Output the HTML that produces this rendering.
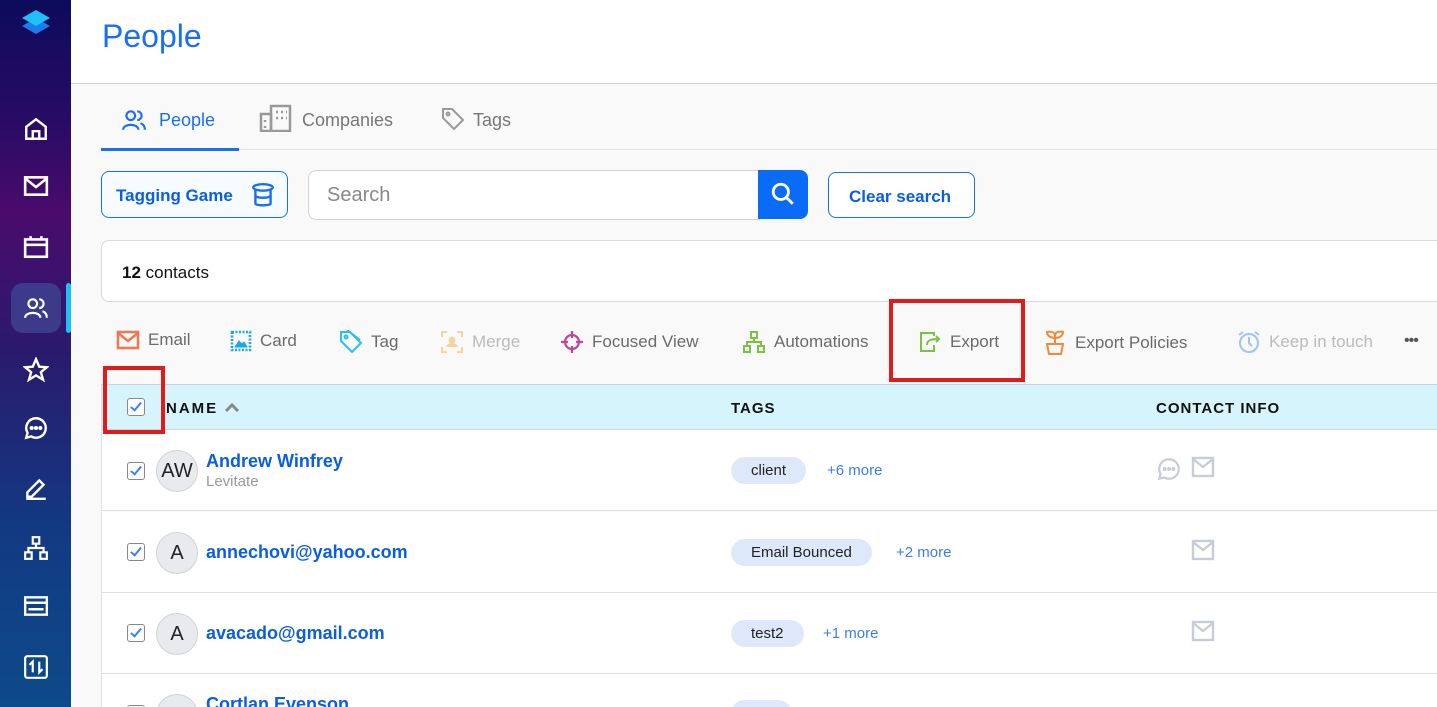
<!DOCTYPE html>
<html style="overflow:hidden;height:707px"><head><meta charset="utf-8"><style>
*{box-sizing:border-box;margin:0;padding:0}
html,body{overflow:hidden}
body{width:1437px;height:707px;overflow:hidden;font-family:"Liberation Sans",sans-serif;background:#f9f9f9;position:relative}
.sb{position:absolute;left:0;top:0;width:71px;height:707px;background:linear-gradient(180deg,#0c0b5c 0%,#2a0b66 18%,#4a0b6c 30%,#2a1a6e 50%,#123a82 75%,#0d4a8a 100%)}
.sb svg{position:absolute;left:23px}
.hdr{position:absolute;left:71px;top:0;right:0;height:84px;background:#fff;border-bottom:1px solid #d0d3dc}
.t{position:absolute;white-space:nowrap}
.tb{position:absolute;color:#777;font-size:18px}
.btn{position:absolute;border:1px solid #1a6ff0;border-radius:8px;background:#fff;color:#0a5ee0;font-size:17px;font-weight:bold}
.act{position:absolute;top:330px;font-size:17px;color:#6a6a6a;display:flex;align-items:center;gap:8px}
.row{position:absolute;left:101px;right:0;height:81px;background:#fff;border-bottom:1px solid #dcdfe6;border-left:1px solid #dcdfe6}
.cb{position:absolute;left:25px;width:18px;height:18px;border:1.5px solid #888;border-radius:3px;background:#fff}
.cb:after{content:"";position:absolute;left:5px;top:1px;width:4px;height:9px;border:solid #3b82f6;border-width:0 2px 2px 0;transform:rotate(40deg)}
.av{position:absolute;left:54px;width:42px;height:42px;border-radius:50%;background:#e8eaee;border:1px solid #cfd3da;font-size:20px;text-align:center;line-height:40px;color:#222}
.nm{position:absolute;left:104px;color:#0a5ee0;font-weight:bold;font-size:18px}
.tag{position:absolute;left:629px;height:27px;border-radius:14px;background:#dde9fb;font-size:15px;line-height:27px;padding:0 20px;color:#222}
.more{position:absolute;color:#3a7cf0;font-size:15px}
</style></head><body>
<div class="sb">
<svg style="top:8px;left:20px" width="32" height="30" viewBox="0 0 32 30"><path d="M16 10 L30 18 L16 26 L2 18Z" fill="#1b7be8"/><path d="M16 2 L30 10 L16 18 L2 10Z" fill="#1ec0f5"/></svg>
<svg style="top:116px" width="26" height="26" viewBox="0 0 24 24" fill="none" stroke="#fff" stroke-width="2.2"><path d="M3 10 L12 3 L21 10 V21 H3Z M9 21 V14 H15 V21"/></svg>
<svg style="top:174px" width="26" height="24" viewBox="0 0 24 22" fill="none" stroke="#fff" stroke-width="2.4"><rect x="2" y="3" width="20" height="16"/><path d="M2 4 L12 12 L22 4"/></svg>
<svg style="top:234px" width="26" height="26" viewBox="0 0 24 24" fill="none" stroke="#fff" stroke-width="2.4"><rect x="2" y="5" width="20" height="16"/><path d="M2 10 H22 M7 2 V6 M17 2 V6"/></svg>
<div style="position:absolute;left:11px;top:283px;width:50px;height:50px;border-radius:12px;background:#3c3a8a"></div>
<div style="position:absolute;left:66px;top:283px;width:5px;height:50px;background:#1ec0f5;border-radius:3px"></div>
<svg style="top:295px" width="26" height="26" viewBox="0 0 24 24" fill="none" stroke="#fff" stroke-width="2"><circle cx="9" cy="8" r="4"/><path d="M2 21 C2 15 16 15 16 21 M15 4 A4 4 0 0 1 15 12 M18 15 C21 16 22 18 22 21"/></svg>
<svg style="top:357px" width="26" height="26" viewBox="0 0 24 24" fill="none" stroke="#fff" stroke-width="2.2"><path d="M12 2 L15 9 L22 9.5 L16.5 14 L18.5 21 L12 17 L5.5 21 L7.5 14 L2 9.5 L9 9Z"/></svg>
<svg style="top:415px" width="26" height="26" viewBox="0 0 24 24" fill="none" stroke="#fff" stroke-width="2.2"><path d="M12 3a9 9 0 1 1-4.5 16.8L3 21l1.2-4.5A9 9 0 0 1 12 3z"/><circle cx="8" cy="12" r=".8" fill="#fff"/><circle cx="12" cy="12" r=".8" fill="#fff"/><circle cx="16" cy="12" r=".8" fill="#fff"/></svg>
<svg style="top:475px" width="26" height="26" viewBox="0 0 24 24" fill="none" stroke="#fff" stroke-width="2.2"><path d="M4 20 L4 16 L15 5 L19 9 L8 20Z M3 22 H21"/></svg>
<svg style="top:535px" width="26" height="26" viewBox="0 0 24 24" fill="none" stroke="#fff" stroke-width="2"><rect x="9" y="2" width="6" height="6"/><rect x="2" y="16" width="6" height="6"/><rect x="16" y="16" width="6" height="6"/><path d="M12 8 V12 M5 16 V12 H19 V16"/></svg>
<svg style="top:594px" width="26" height="24" viewBox="0 0 24 22" fill="none" stroke="#fff" stroke-width="2.2"><rect x="2" y="3" width="20" height="16"/><path d="M2 8 H22 M5 14 H19"/></svg>
<svg style="top:654px" width="26" height="26" viewBox="0 0 24 24" fill="none" stroke="#fff" stroke-width="2"><rect x="2" y="2" width="20" height="20" rx="2"/><path d="M9 17 V7 L6 10 M15 7 V17 L18 14"/></svg>
</div>
<div class="hdr"><div class="t" style="left:31px;top:18px;font-size:32px;color:#1a6ff0">People</div></div>
<div style="position:absolute;left:101px;right:0;top:149px;height:1px;background:#e2e4ea"></div>
<div style="position:absolute;left:101px;top:148px;width:138px;height:3px;background:#1a6ff0"></div>
<svg style="position:absolute;left:120px;top:107px" width="28" height="26" viewBox="0 0 24 24" fill="none" stroke="#1a6ff0" stroke-width="2"><circle cx="9" cy="8" r="4"/><path d="M2 21 C2 15 16 15 16 21 M15 4 A4 4 0 0 1 15 12 M18 15 C21 16 22 18 22 21"/></svg>
<div class="tb" style="left:159px;top:110px;color:#1a6ff0">People</div>
<svg style="position:absolute;left:259px;top:104px" width="33" height="28" viewBox="0 0 33 28" fill="none" stroke="#999" stroke-width="2.5"><rect x="12" y="2" width="19" height="25"/><rect x="2" y="10" width="10" height="17"/><path d="M17 8h2M22 8h2M27 8h1M17 14h2M22 14h2M27 14h1M6 16v2M6 22v2" /></svg>
<div class="tb" style="left:302px;top:110px">Companies</div>
<svg style="position:absolute;left:441px;top:107px" width="24" height="24" viewBox="0 0 24 24" fill="none" stroke="#999" stroke-width="2"><path d="M2 2 H11 L22 13 L13 22 L2 11Z"/><circle cx="7" cy="7" r="1.5"/></svg>
<div class="tb" style="left:473px;top:110px">Tags</div>
<div class="btn" style="left:101px;top:171px;width:187px;height:47px;background:#f6fbff"><span class="t" style="left:14px;top:14px">Tagging Game</span>
<svg style="position:absolute;left:148px;top:10px" width="26" height="26" viewBox="0 0 24 24" fill="none" stroke="#1a6ff0" stroke-width="2.2"><ellipse cx="12" cy="5" rx="9" ry="3"/><path d="M5 7 V20 C5 22 19 22 19 20 V7 M5 13 C8 15 16 15 19 13"/></svg></div>
<div style="position:absolute;left:308px;top:170px;width:452px;height:50px;background:#fff;border:1px solid #cfd3da;border-radius:8px 0 0 8px"><span class="t" style="left:18px;top:13px;font-size:20px;color:#888">Search</span></div>
<div style="position:absolute;left:758px;top:170px;width:50px;height:49px;background:#0a6cf5;border-radius:0 8px 8px 0"><svg style="position:absolute;left:12px;top:11px" width="26" height="26" viewBox="0 0 24 24" fill="none" stroke="#fff" stroke-width="2.6"><circle cx="10" cy="10" r="7"/><path d="M15 15 L21 21"/></svg></div>
<div class="btn" style="left:828px;top:172px;width:147px;height:46px"><span class="t" style="left:20px;top:14px">Clear search</span></div>
<div style="position:absolute;left:101px;top:240px;right:-10px;height:62px;background:#fff;border:1px solid #d6d9e0;border-radius:8px"><span class="t" style="left:20px;top:22px;font-size:17px;color:#111"><b>12</b> contacts</span></div>
<div class="act" style="left:116px"><svg width="24" height="20" viewBox="0 0 24 20" fill="none" stroke="#ee7a55" stroke-width="2.6"><rect x="2" y="2" width="20" height="16"/><path d="M2 3 L12 11 L22 3"/></svg>Email</div>
<div class="act" style="left:230px"><svg width="22" height="22" viewBox="0 0 22 22" fill="none" stroke="#1aa8e8" stroke-width="2.6" ><rect x="2" y="2" width="18" height="18" stroke-dasharray="2 1.5"/><path d="M5 17 L9 11 L12 14 L14 12 L17 17Z" fill="#1aa8e8" stroke-width="1"/></svg>Card</div>
<div class="act" style="left:339px"><svg width="24" height="24" viewBox="0 0 24 24" fill="none" stroke="#28c0ee" stroke-width="2"><path d="M2 2 H11 L22 13 L13 22 L2 11Z M8 0 L21 10"/><circle cx="7" cy="7" r="1.5"/></svg>Tag</div>
<div class="act" style="left:440px;color:#bbb"><svg width="24" height="24" viewBox="0 0 24 24" fill="none" stroke="#f5d49a" stroke-width="2"><path d="M2 7V2H7M17 2H22V7M22 17V22H17M7 22H2V17"/><circle cx="12" cy="10" r="2.5" fill="#f5d49a"/><path d="M7 17 C8 13 16 13 17 17" fill="#f5d49a"/></svg>Merge</div>
<div class="act" style="left:560px"><svg width="24" height="24" viewBox="0 0 24 24" fill="none" stroke="#c0459a" stroke-width="2.2"><circle cx="12" cy="12" r="7"/><path d="M12 1V8M12 16V23M1 12H8M16 12H23"/></svg>Focused View</div>
<div class="act" style="left:742px"><svg width="24" height="24" viewBox="0 0 24 24" fill="none" stroke="#7cc242" stroke-width="2"><rect x="9" y="2" width="6" height="6"/><rect x="2" y="16" width="6" height="6"/><rect x="16" y="16" width="6" height="6"/><path d="M12 8 V12 M5 16 V12 H19 V16"/></svg>Automations</div>
<div class="act" style="left:918px"><svg width="24" height="24" viewBox="0 0 24 24" fill="none" stroke="#7cc242" stroke-width="2"><path d="M16 15 V21 H3 V3 H16 V6 M9 15 C9 10 13 9 21 9 M18 6 L21 9 L18 12"/></svg>Export</div>
<div class="act" style="left:1043px"><svg width="24" height="26" viewBox="0 0 24 26" fill="none" stroke="#f08a3a" stroke-width="2"><path d="M4 14 H20 L18 24 H6Z M12 14 V6 M12 6 C12 2 8 1 4 2 C4 6 8 8 12 8 M12 6 C12 2 16 1 20 2 C20 6 16 8 12 8"/></svg>Export Policies</div>
<div class="act" style="left:1237px;color:#bbb"><svg width="24" height="24" viewBox="0 0 24 24" fill="none" stroke="#9cc4f5" stroke-width="2"><circle cx="12" cy="13" r="9"/><path d="M12 7V13L15 16M2 5L6 2M22 5L18 2"/></svg>Keep in touch</div>
<div class="t" style="left:1404px;top:332px;font-size:16px;color:#555;letter-spacing:-1px">•••</div>
<div style="position:absolute;left:101px;right:0;top:384px;height:46px;background:#d6f4fc;border-top:1px solid #c9d3e0;border-bottom:1px solid #c9d3e0;border-left:1px solid #dcdfe6">
<div class="cb" style="top:13px;border-color:#888"></div>
<span class="t" style="left:64px;top:15px;font-weight:bold;font-size:15px;letter-spacing:2px;color:#111">NAME</span>
<svg style="position:absolute;left:122px;top:16px" width="16" height="12" viewBox="0 0 16 12" fill="none" stroke="#888" stroke-width="3"><path d="M2 10 L8 4 L14 10"/></svg>
<span class="t" style="left:629px;top:15px;font-weight:bold;font-size:15px;letter-spacing:1px;color:#111">TAGS</span>
<span class="t" style="left:1054px;top:15px;font-weight:bold;font-size:15px;letter-spacing:1px;color:#111">CONTACT INFO</span>
</div>
<div class="row" style="top:430px"><div class="cb" style="top:32px"></div><div class="av" style="top:20px">AW</div><div class="nm" style="top:21px">Andrew Winfrey</div><div class="t" style="left:104px;top:43px;font-size:15px;color:#999">Levitate</div><div class="tag" style="top:27px">client</div><div class="more" style="left:725px;top:32px">+6 more</div>
<svg style="position:absolute;left:1054px;top:26px" width="26" height="26" viewBox="0 0 24 24" fill="none" stroke="#c8ccd6" stroke-width="2"><path d="M12 3a9 9 0 1 1-4.5 16.8L3 21l1.2-4.5A9 9 0 0 1 12 3z"/><circle cx="8" cy="12" r=".8"/><circle cx="12" cy="12" r=".8"/><circle cx="16" cy="12" r=".8"/></svg>
<svg style="position:absolute;left:1089px;top:26px" width="24" height="22" viewBox="0 0 24 22" fill="none" stroke="#c8ccd6" stroke-width="2.4"><rect x="2" y="2" width="20" height="18"/><path d="M2 3 L12 11 L22 3"/></svg></div>
<div class="row" style="top:512px"><div class="cb" style="top:31px"></div><div class="av" style="top:20px">A</div><div class="nm" style="top:30px">annechovi@yahoo.com</div><div class="tag" style="top:27px">Email Bounced</div><div class="more" style="left:794px;top:32px">+2 more</div>
<svg style="position:absolute;left:1089px;top:27px" width="24" height="22" viewBox="0 0 24 22" fill="none" stroke="#c8ccd6" stroke-width="2.4"><rect x="2" y="2" width="20" height="18"/><path d="M2 3 L12 11 L22 3"/></svg></div>
<div class="row" style="top:593px"><div class="cb" style="top:31px"></div><div class="av" style="top:20px">A</div><div class="nm" style="top:30px">avacado@gmail.com</div><div class="tag" style="top:27px">test2</div><div class="more" style="left:721px;top:32px">+1 more</div>
<svg style="position:absolute;left:1089px;top:27px" width="24" height="22" viewBox="0 0 24 22" fill="none" stroke="#c8ccd6" stroke-width="2.4"><rect x="2" y="2" width="20" height="18"/><path d="M2 3 L12 11 L22 3"/></svg></div>
<div class="row" style="top:674px;height:33px;border-bottom:none"><div class="cb" style="top:31px"></div><div class="av" style="top:20px"></div><div class="nm" style="top:20px">Cortlan Evenson</div><div class="tag" style="top:26px">&nbsp;&nbsp;&nbsp;&nbsp;&nbsp;</div></div>
<div style="position:absolute;left:103px;top:366px;width:62px;height:68px;border:4px solid #e01b1b"></div>
<div style="position:absolute;left:889px;top:299px;width:136px;height:83px;border:4px solid #e01b1b"></div>
</body></html>
